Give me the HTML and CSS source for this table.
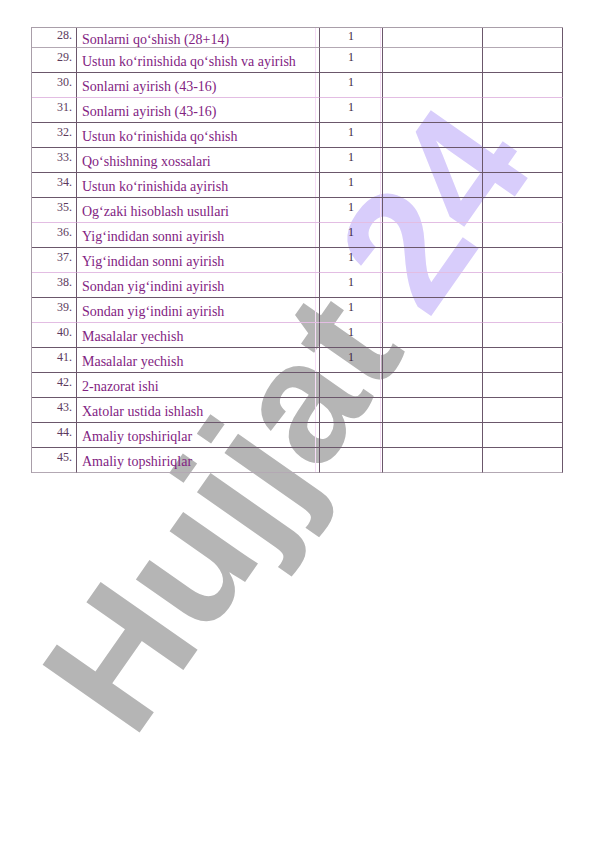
FILE: index.html
```html
<!DOCTYPE html>
<html lang="uz">
<head>
<meta charset="utf-8">
<title>Jadval</title>
<link rel="stylesheet" href="styles.css">
</head>
<body>
<div class="watermark"><span class="wm-gray">Hujjat</span><span class="wm-violet">24</span></div>
<div class="sheet">
  <div class="row first line-gray"><div class="num">28.</div><div class="topic">Sonlarni qo‘shish (28+14)</div><div class="hours">1</div><div class="c4"></div><div class="c5"></div></div>
  <div class="row"><div class="num">29.</div><div class="topic">Ustun ko‘rinishida qo‘shish va ayirish</div><div class="hours">1</div><div class="c4"></div><div class="c5"></div></div>
  <div class="row line-pink"><div class="num">30.</div><div class="topic">Sonlarni ayirish (43-16)</div><div class="hours">1</div><div class="c4"></div><div class="c5"></div></div>
  <div class="row"><div class="num">31.</div><div class="topic">Sonlarni ayirish (43-16)</div><div class="hours">1</div><div class="c4"></div><div class="c5"></div></div>
  <div class="row"><div class="num">32.</div><div class="topic">Ustun ko‘rinishida qo‘shish</div><div class="hours">1</div><div class="c4"></div><div class="c5"></div></div>
  <div class="row"><div class="num">33.</div><div class="topic">Qo‘shishning xossalari</div><div class="hours">1</div><div class="c4"></div><div class="c5"></div></div>
  <div class="row"><div class="num">34.</div><div class="topic">Ustun ko‘rinishida ayirish</div><div class="hours">1</div><div class="c4"></div><div class="c5"></div></div>
  <div class="row line-pink"><div class="num">35.</div><div class="topic">Og‘zaki hisoblash usullari</div><div class="hours">1</div><div class="c4"></div><div class="c5"></div></div>
  <div class="row"><div class="num">36.</div><div class="topic">Yig‘indidan sonni ayirish</div><div class="hours">1</div><div class="c4"></div><div class="c5"></div></div>
  <div class="row line-pink"><div class="num">37.</div><div class="topic">Yig‘indidan sonni ayirish</div><div class="hours">1</div><div class="c4"></div><div class="c5"></div></div>
  <div class="row"><div class="num">38.</div><div class="topic">Sondan yig‘indini ayirish</div><div class="hours">1</div><div class="c4"></div><div class="c5"></div></div>
  <div class="row line-pink"><div class="num">39.</div><div class="topic">Sondan yig‘indini ayirish</div><div class="hours">1</div><div class="c4"></div><div class="c5"></div></div>
  <div class="row"><div class="num">40.</div><div class="topic">Masalalar yechish</div><div class="hours">1</div><div class="c4"></div><div class="c5"></div></div>
  <div class="row"><div class="num">41.</div><div class="topic">Masalalar yechish</div><div class="hours">1</div><div class="c4"></div><div class="c5"></div></div>
  <div class="row"><div class="num">42.</div><div class="topic">2-nazorat ishi</div><div class="hours"></div><div class="c4"></div><div class="c5"></div></div>
  <div class="row"><div class="num">43.</div><div class="topic">Xatolar ustida ishlash</div><div class="hours"></div><div class="c4"></div><div class="c5"></div></div>
  <div class="row"><div class="num">44.</div><div class="topic">Amaliy topshiriqlar</div><div class="hours"></div><div class="c4"></div><div class="c5"></div></div>
  <div class="row last line-gray"><div class="num">45.</div><div class="topic">Amaliy topshiriqlar</div><div class="hours"></div><div class="c4"></div><div class="c5"></div></div>
</div>
</body>
</html>
```

FILE: styles.css
```css
html, body {
  margin: 0;
  padding: 0;
  background: #ffffff;
}

body {
  position: relative;
  width: 596px;
  height: 842px;
  overflow: hidden;
  font-family: "Liberation Serif", "Times New Roman", serif;
}

.sheet {
  position: relative;
  z-index: 1;
  margin: 27px 0 0 31px;
  width: 532px;
  display: grid;
  grid-template-columns: 45px 243px 63px 100px 80px;
  grid-template-rows: 20px;
  grid-auto-rows: 25px;
  border-top: 1px solid #a99ea9;
  border-left: 1px solid #a99ea9;
  box-sizing: border-box;
}

.row {
  display: contents;
}

.row > div {
  box-sizing: border-box;
  border-right: 1px solid #6b576b;
  border-bottom: 1px solid #6b576b;
}

.row.line-pink > div {
  border-bottom-color: #e3bde3;
}

.row.line-gray > div {
  border-bottom-color: #b3a8b3;
}

.num {
  text-align: right;
  padding: 3px 4px 0 0;
  font-size: 12px;
  line-height: 12px;
  color: #5c3a5c;
}

.topic {
  padding: 6px 0 0 5px;
  font-size: 14px;
  line-height: 16px;
  color: #822382;
  white-space: nowrap;
  background: linear-gradient(to right, transparent 238px, #f6dcf6 238px, #f6dcf6 239px, transparent 239px);
}

.row.first .num {
  padding-top: 1px;
}

.row.first .topic {
  padding-top: 4px;
}

.hours {
  text-align: center;
  padding-top: 3px;
  font-size: 12px;
  line-height: 12px;
  color: #3f1f3f;
  background: linear-gradient(to right, transparent 60px, #f6dcf6 60px, #f6dcf6 61px, transparent 61px);
}

.row.first .hours {
  padding-top: 2px;
}

.c5 {
  border-right-color: #8a7a8a;
}

.watermark {
  position: absolute;
  z-index: 0;
  left: 133px;
  top: 596px;
  font-family: "Liberation Sans", Arial, sans-serif;
  font-weight: 700;
  font-size: 172px;
  line-height: 172px;
  white-space: nowrap;
  transform-origin: 0 146px;
  transform: rotate(-55deg);
}

.wm-gray {
  color: #b5b5b5;
}

.wm-violet {
  margin-left: 36px;
  color: #d8cdfb;
}
```
